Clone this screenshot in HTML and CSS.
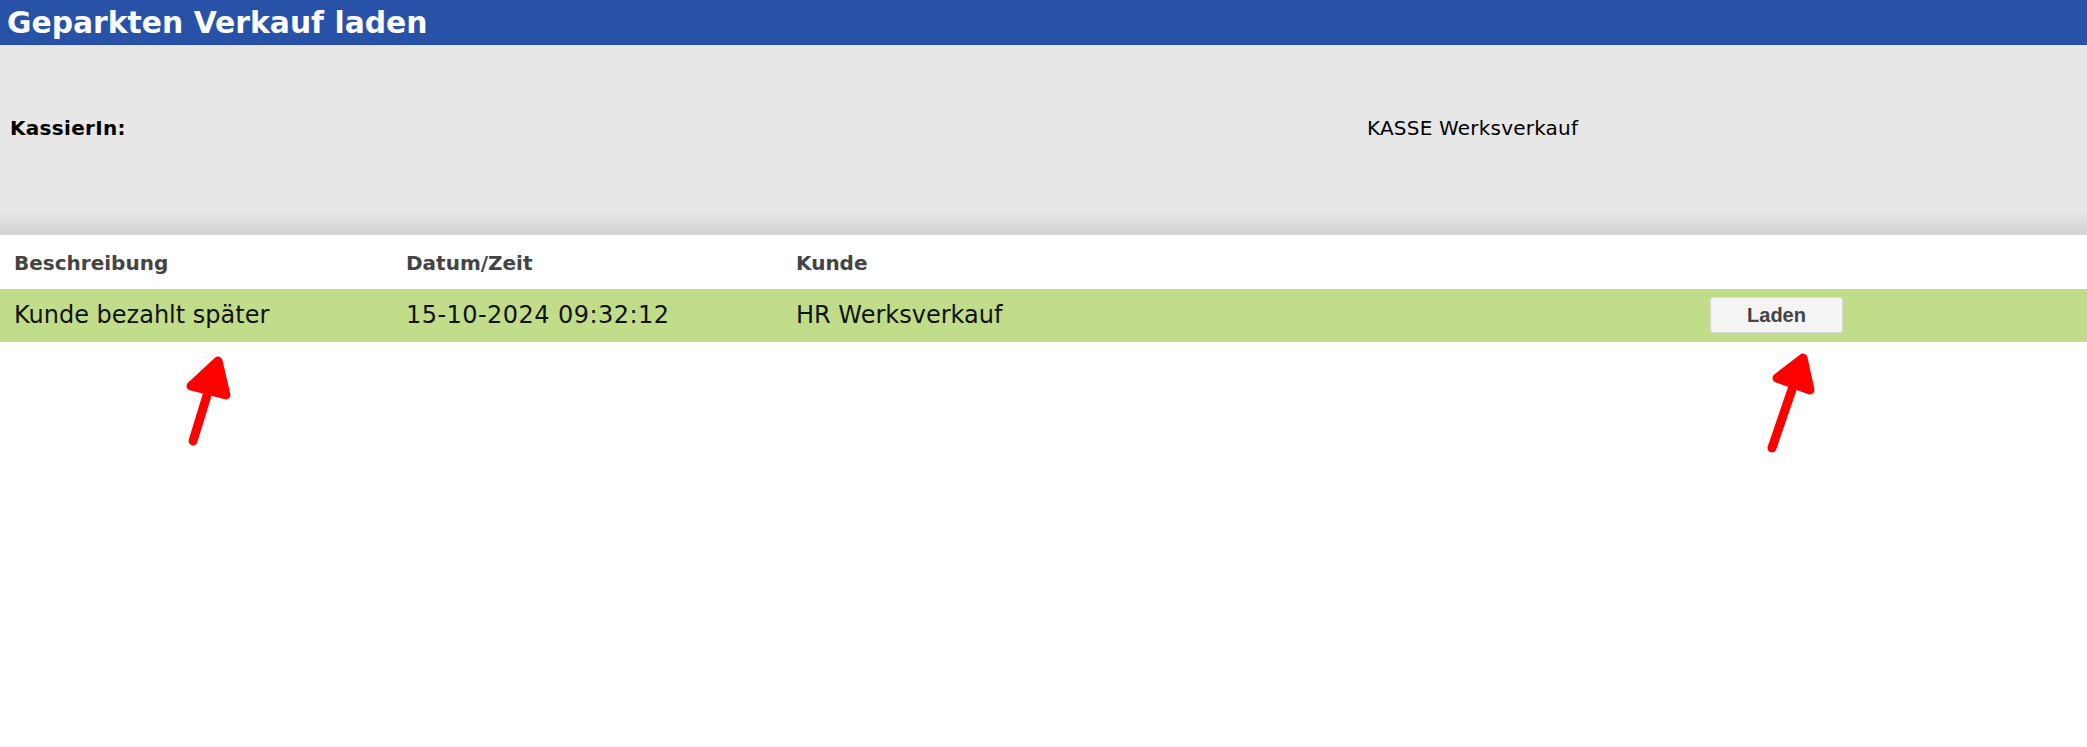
FILE: index.html
```html
<!DOCTYPE html>
<html lang="de">
<head>
<meta charset="utf-8">
<title>Geparkten Verkauf laden</title>
<link rel="stylesheet" href="styles.css">
</head>
<body>
<div class="page">
  <header class="titlebar">Geparkten Verkauf laden</header>
  <section class="info">
    <div class="info-label">KassierIn:</div>
    <div class="info-value">KASSE Werksverkauf</div>
  </section>
  <section class="table">
    <div class="row head">
      <div class="cell">Beschreibung</div>
      <div class="cell">Datum/Zeit</div>
      <div class="cell">Kunde</div>
      <div class="cell"></div>
      <div class="cell"></div>
    </div>
    <div class="row item">
      <div class="cell">Kunde bezahlt später</div>
      <div class="cell date">15-10-2024 09:32:12</div>
      <div class="cell">HR Werksverkauf</div>
      <div class="cell action"><button class="btn" type="button">Laden</button></div>
      <div class="cell"></div>
    </div>
  </section>
  <svg class="arrow arrow-left" width="60" height="100" viewBox="0 0 60 100">
    <line x1="13" y1="91" x2="36" y2="16" />
    <polygon points="38,11 11,36 46,45" />
  </svg>
  <svg class="arrow arrow-right" width="64" height="115" viewBox="0 0 64 115">
    <line x1="12" y1="103" x2="41" y2="18" />
    <polygon points="43,13 17,33 50,45" />
  </svg>
</div>
</body>
</html>
```
FILE: styles.css
```css
html, body {
  margin: 0;
  padding: 0;
  background: #ffffff;
}

body {
  font-family: "DejaVu Sans", Verdana, sans-serif;
  color: #000;
}

.page {
  position: relative;
  width: 2087px;
  min-height: 747px;
}

.titlebar {
  height: 45px;
  line-height: 45px;
  background: #2851a8;
  color: #ffffff;
  font-weight: bold;
  font-size: 29.8px;
  padding-left: 7px;
  white-space: nowrap;
}

.info {
  height: 190px;
  box-sizing: border-box;
  padding: 71px 0 0 10px;
  background: linear-gradient(to bottom, #e7e7e7 0px, #e7e7e7 165px, #d3d3d3 190px);
  display: grid;
  grid-template-columns: 1357px 1fr;
  align-items: start;
  font-size: 20px;
  line-height: 24px;
}

.info-label {
  font-weight: bold;
  letter-spacing: 0.3px;
}

.info-value {
  letter-spacing: 0.2px;
}

.table {
  display: flex;
  flex-direction: column;
}

.row {
  display: grid;
  grid-template-columns: 392px 390px 1fr 133px 244px;
  align-items: center;
}

.cell {
  padding-left: 14px;
  white-space: nowrap;
}

.head {
  height: 54px;
  box-sizing: border-box;
  padding: 16px 0 14px;
  align-items: start;
  font-size: 20px;
  line-height: 24px;
  font-weight: bold;
  color: #444444;
}

.item {
  height: 53px;
  box-sizing: border-box;
  background: #c2dd8a;
  border-bottom: 1px solid #cfcfcf;
  font-size: 24px;
  line-height: 28px;
  color: #111111;
}

.cell.date {
  letter-spacing: 0.45px;
}

.cell.action {
  padding-left: 0;
  display: flex;
}

.btn {
  width: 133px;
  height: 36px;
  margin: 0;
  padding: 0;
  box-sizing: border-box;
  border: 1px solid #d8d8d8;
  border-radius: 3px;
  background: #f4f4f4;
  color: #444444;
  font-family: "Liberation Sans", Arial, sans-serif;
  font-weight: bold;
  font-size: 20px;
  line-height: 22px;
  cursor: pointer;
}

.arrow {
  position: absolute;
  overflow: visible;
}

.arrow line,
.arrow polygon {
  stroke: #ff0000;
  stroke-width: 9;
  stroke-linecap: round;
  stroke-linejoin: round;
  fill: #ff0000;
}

.arrow-left {
  left: 180px;
  top: 350px;
}

.arrow-right {
  left: 1760px;
  top: 345px;
}
```
